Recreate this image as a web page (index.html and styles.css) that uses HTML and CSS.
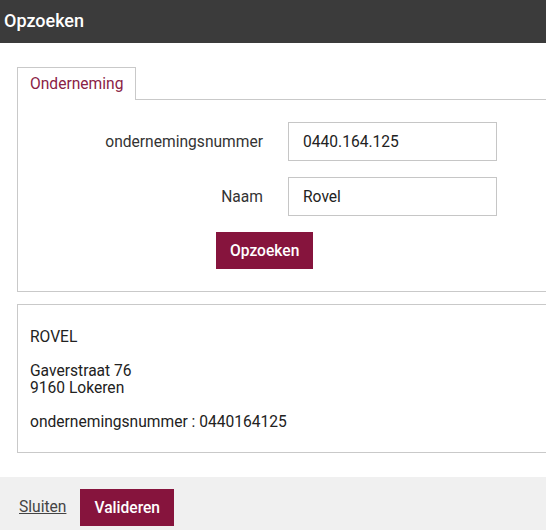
FILE: index.html
```html
<!DOCTYPE html>
<html lang="nl">

<head>
    <meta charset="UTF-8">
    <meta name="viewport" content="width=device-width, initial-scale=1.0">
    <title>Opzoeken</title>
    <link rel="stylesheet" href="styles.css">
</head>

<body>
    <header class="dialog-header">
        <h1 class="dialog-title">Opzoeken</h1>
    </header>

    <main class="dialog-body">
        <section class="panel">
            <ul class="tabs">
                <li class="tab active">Onderneming</li>
            </ul>
            <div class="tab-content">
                <form class="search-form">
                    <label class="field-label" for="nr">ondernemingsnummer</label>
                    <input class="field-input" id="nr" type="text" value="0440.164.125">
                    <label class="field-label" for="naam">Naam</label>
                    <input class="field-input" id="naam" type="text" value="Rovel">
                    <div class="form-actions">
                        <button class="btn" type="button">Opzoeken</button>
                    </div>
                </form>
            </div>
        </section>

        <section class="result">
            <p>ROVEL</p>
            <p>Gaverstraat 76<br>9160 Lokeren</p>
            <p>ondernemingsnummer : 0440164125</p>
        </section>
    </main>

    <footer class="dialog-footer">
        <a class="link" href="#">Sluiten</a>
        <button class="btn" type="button">Valideren</button>
    </footer>
</body>

</html>
```

FILE: styles.css
```css
html,
body {
    margin: 0;
    padding: 0;
}

body {
    width: 546px;
    height: 530px;
    overflow: hidden;
    background-color: #fff;
    font-family: Roboto, "Liberation Sans", sans-serif;
    font-size: 15.6px;
    color: #333;
}

/*-----header-----*/
.dialog-header {
    height: 43px;
    display: flex;
    align-items: center;
    padding: 0 4px;
    background-color: #3b3b3b;
}

.dialog-title {
    margin: 0 0 2px;
    font-size: 18px;
    font-weight: 500;
    color: #fff;
}

/*-----body-----*/
.dialog-body {
    padding: 24px 0 0 17px;
    margin-right: -20px;
}

.tabs {
    display: flex;
    margin: 0;
    padding: 0;
    list-style: none;
}

.tab {
    position: relative;
    height: 32px;
    margin-bottom: -1px;
    padding: 0 12px;
    display: flex;
    align-items: center;
    border: 1px solid #c9c9c9;
    border-bottom: none;
    background-color: #fff;
    color: #8a2145;
    z-index: 1;
}

.tab-content {
    padding: 22px 0 22px;
    border: 1px solid #c9c9c9;
}

.search-form {
    display: grid;
    grid-template-columns: 245px 209px;
    column-gap: 25px;
    row-gap: 16px;
    align-items: center;
}

.field-label {
    text-align: right;
}

.field-input {
    box-sizing: border-box;
    height: 39px;
    padding: 0 14px;
    border: 1px solid #c6c6c6;
    font-family: inherit;
    font-size: 15.6px;
    color: #222;
    outline: none;
}

.form-actions {
    grid-column: 1 / -1;
    padding-left: 198px;
}

.btn {
    height: 37px;
    padding: 0 14px;
    border: none;
    background-color: #86143d;
    font-family: inherit;
    font-size: 15.6px;
    font-weight: 500;
    color: #fff;
}

.result {
    margin-top: 12px;
    padding: 24px 12px 21px;
    border: 1px solid #c9c9c9;
    color: #222;
}

.result p {
    margin: 0 0 16px;
    line-height: 17.6px;
}

.result p:last-child {
    margin-bottom: 0;
}

/*-----footer-----*/
.dialog-footer {
    margin-top: 24px;
    height: 53px;
    box-sizing: border-box;
    padding: 12px 19px 0;
    display: flex;
    align-items: flex-start;
    gap: 14px;
    background-color: #f0f0f0;
}

.dialog-footer .link {
    line-height: 37px;
    color: #444;
    text-decoration: underline;
}
```
